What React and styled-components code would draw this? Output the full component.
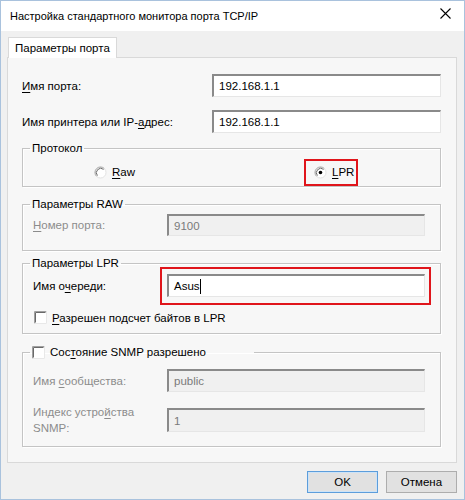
import React from 'react';
import styled, { createGlobalStyle } from 'styled-components';

const GlobalStyle = createGlobalStyle`
  html, body { margin: 0; padding: 0; background: #f0f0f0; }
  body {
    font-family: "Liberation Sans", Arial, sans-serif;
    font-size: 11.5px;
    color: #000;
  }
  * { box-sizing: border-box; }
`;

const Window = styled.div`
  width: 465px;
  height: 500px;
  border: 1px solid #a9c2dd;
  display: flex;
  flex-direction: column;
  background: #f0f0f0;
`;

const TitleBar = styled.div`
  height: 30px;
  background: #fff;
  display: flex;
  align-items: center;
  justify-content: space-between;
  padding: 0 8px 0 9px;
  font-size: 11px;
`;

const CloseBtn = styled.div`
  width: 22px;
  height: 22px;
  display: flex;
  align-items: center;
  justify-content: center;
  margin-top: -6px;
`;

const Body = styled.div`
  flex: 1;
  display: flex;
  flex-direction: column;
  padding: 6px 7px 0 6px;
`;

const TabStrip = styled.div`
  display: flex;
  padding-left: 1px;
`;

const Tab = styled.div`
  height: 21px;
  padding: 0 6px;
  display: flex;
  align-items: center;
  background: #fff;
  border: 1px solid #d9d9d9;
  border-bottom: none;
  margin-bottom: -1px;
  position: relative;
  z-index: 1;
`;

const Panel = styled.div`
  width: 450px;
  height: 406px;
  border: 1px solid #d9d9d9;
  background: #f7f7f7;
  display: flex;
  flex-direction: column;
  padding: 16px 0 0 0;
`;

const Row = styled.div`
  display: grid;
  grid-template-columns: ${p => p.$label}px 1fr;
  align-items: center;
  padding: 0 ${p => p.$right || 15}px 0 ${p => p.$left || 14}px;
  margin-top: ${p => p.$top || 0}px;
  color: ${p => (p.$disabled ? '#8c8c8c' : '#000')};
`;

const Label = styled.span`
  line-height: 16px;
`;

const Key = styled.span`
  text-decoration: underline;
  text-underline-offset: 2px;
`;

const Input = styled.div`
  height: ${p => p.$h || 23}px;
  display: flex;
  align-items: center;
  padding-left: 5px;
  border-style: solid;
  border-width: 2px 1px 1px 2px;
  border-color: #8a8a8a #e6e6e6 #e6e6e6 #8a8a8a;
  background: ${p => (p.$disabled ? '#f0f0f0' : '#fff')};
  color: ${p => (p.$disabled ? '#7a7a7a' : '#000')};
`;

const Caret = styled.span`
  display: inline-block;
  width: 1px;
  height: 15px;
  background: #000;
`;

const Group = styled.fieldset`
  margin: ${p => p.$top}px 15px 0 14px;
  padding: 0;
  height: ${p => p.$h}px;
  border: 1px solid #c4c4c4;
  box-shadow: inset 1px 1px 0 #fff, 1px 1px 0 #fff;
  min-width: 0;
`;

const Legend = styled.legend`
  margin-left: 7px;
  padding: 0 2px;
  width: ${p => (p.$w ? `${p.$w}px` : 'auto')};
  line-height: 16px;
  display: flex;
  align-items: center;
  gap: 5px;
`;

const GroupBody = styled.div`
  display: flex;
  flex-direction: column;
  padding-top: ${p => p.$pt || 0}px;
`;

const RadioRow = styled.div`
  display: flex;
  align-items: center;
  height: 26px;
  padding-left: 69px;
`;

const RadioItem = styled.span`
  display: inline-flex;
  align-items: center;
  gap: 5px;
  height: 27px;
  width: ${p => p.$w}px;
  padding-left: ${p => p.$pl || 0}px;
  border: ${p => (p.$marked ? '2px solid #e0151b' : '2px solid transparent')};
`;

const CheckRow = styled.div`
  display: flex;
  align-items: center;
  gap: 5px;
  padding-left: 11px;
  margin-top: ${p => p.$top || 0}px;
`;

const Marked = styled.div`
  border: 2px solid #e0151b;
  padding: 5px 4px 6px 5px;
  margin: -7px -6px -8px -7px;
`;

const Footer = styled.div`
  display: flex;
  justify-content: flex-end;
  gap: 8px;
  padding: 8px 0 0 0;
`;

const Button = styled.div`
  width: 71px;
  height: 22px;
  display: flex;
  align-items: center;
  justify-content: center;
  background: #e1e1e1;
  border: 1px solid ${p => (p.$default ? '#5c9ddb' : '#adadad')};
  box-shadow: ${p => (p.$default ? 'inset 0 0 0 1px #cde3f7' : 'none')};
`;

const Radio = ({ checked }) => (
  <svg width="13" height="13" viewBox="0 0 13 13">
    <circle cx="6.5" cy="6.5" r="5.5" fill="#fff" />
    <path d="M2.6 10.4 A5.5 5.5 0 0 1 10.4 2.6" fill="none" stroke="#a0a0a0" />
    <path d="M3.4 9.6 A4.4 4.4 0 0 1 9.6 3.4" fill="none" stroke="#696969" />
    <path d="M10.4 2.6 A5.5 5.5 0 0 1 2.6 10.4" fill="none" stroke="#e3e3e3" />
    {checked && <circle cx="6.5" cy="6.5" r="1.8" fill="#000" />}
  </svg>
);

const Check = () => (
  <svg width="13" height="13" viewBox="0 0 13 13">
    <rect x="0" y="0" width="13" height="13" fill="#fff" />
    <path d="M0.5 12.5 V0.5 H12.5" fill="none" stroke="#a0a0a0" />
    <path d="M1.5 11.5 V1.5 H11.5" fill="none" stroke="#696969" />
    <path d="M12.5 0.5 V12.5 H0.5" fill="none" stroke="#e8e8e8" />
  </svg>
);

export default function App() {
  return (
    <>
      <GlobalStyle />
      <Window>
        <TitleBar>
          <span>Настройка стандартного монитора порта TCP/IP</span>
          <CloseBtn>
            <svg width="11" height="11" viewBox="0 0 11 11">
              <path d="M0.5 0.5 L10.5 10.5 M10.5 0.5 L0.5 10.5" stroke="#000" strokeWidth="1.1" />
            </svg>
          </CloseBtn>
        </TitleBar>
        <Body>
          <TabStrip>
            <Tab>Параметры порта</Tab>
          </TabStrip>
          <Panel>
            <Row $label={190}>
              <Label><Key>И</Key>мя порта:</Label>
              <Input>192.168.1.1</Input>
            </Row>
            <Row $label={190} $top={13}>
              <Label>Имя принтера или IP-<Key>а</Key>дрес:</Label>
              <Input>192.168.1.1</Input>
            </Row>

            <Group $top={7} $h={47}>
              <Legend>Протокол</Legend>
              <GroupBody $pt={3}>
                <RadioRow>
                  <RadioItem $w={212}>
                    <Radio /> <span><Key>R</Key>aw</span>
                  </RadioItem>
                  <RadioItem $w={54} $pl={8} $marked>
                    <Radio checked /> <span><Key>L</Key>PR</span>
                  </RadioItem>
                </RadioRow>
              </GroupBody>
            </Group>

            <Group $top={9} $h={55}>
              <Legend>Параметры RAW</Legend>
              <GroupBody $pt={2}>
                <Row $label={134} $left={10} $disabled>
                  <Label><Key>Н</Key>омер порта:</Label>
                  <Input $h={22} $disabled>9100</Input>
                </Row>
              </GroupBody>
            </Group>

            <Group $top={4} $h={79}>
              <Legend>Параметры LPR</Legend>
              <GroupBody $pt={3}>
                <Row $label={134} $left={10}>
                  <Label>Имя о<Key>ч</Key>ереди:</Label>
                  <Marked>
                    <Input>Asus<Caret /></Input>
                  </Marked>
                </Row>
                <CheckRow $top={14}>
                  <Check />
                  <span><Key>Р</Key>азрешен подсчет байтов в LPR</span>
                </CheckRow>
              </GroupBody>
            </Group>

            <Group $top={10} $h={103}>
              <Legend $w={224}>
                <Check />
                <span>Сос<Key>т</Key>ояние SNMP разрешено</span>
              </Legend>
              <GroupBody $pt={9}>
                <Row $label={134} $left={10} $disabled>
                  <Label>Имя <Key>с</Key>ообщества:</Label>
                  <Input $disabled>public</Input>
                </Row>
                <Row $label={134} $left={10} $top={12} $disabled>
                  <Label>Индекс устро<Key>й</Key>ства<br />SNMP:</Label>
                  <Input $h={24} $disabled>1</Input>
                </Row>
              </GroupBody>
            </Group>
          </Panel>
          <Footer>
            <Button $default>OK</Button>
            <Button>Отмена</Button>
          </Footer>
        </Body>
      </Window>
    </>
  );
}
